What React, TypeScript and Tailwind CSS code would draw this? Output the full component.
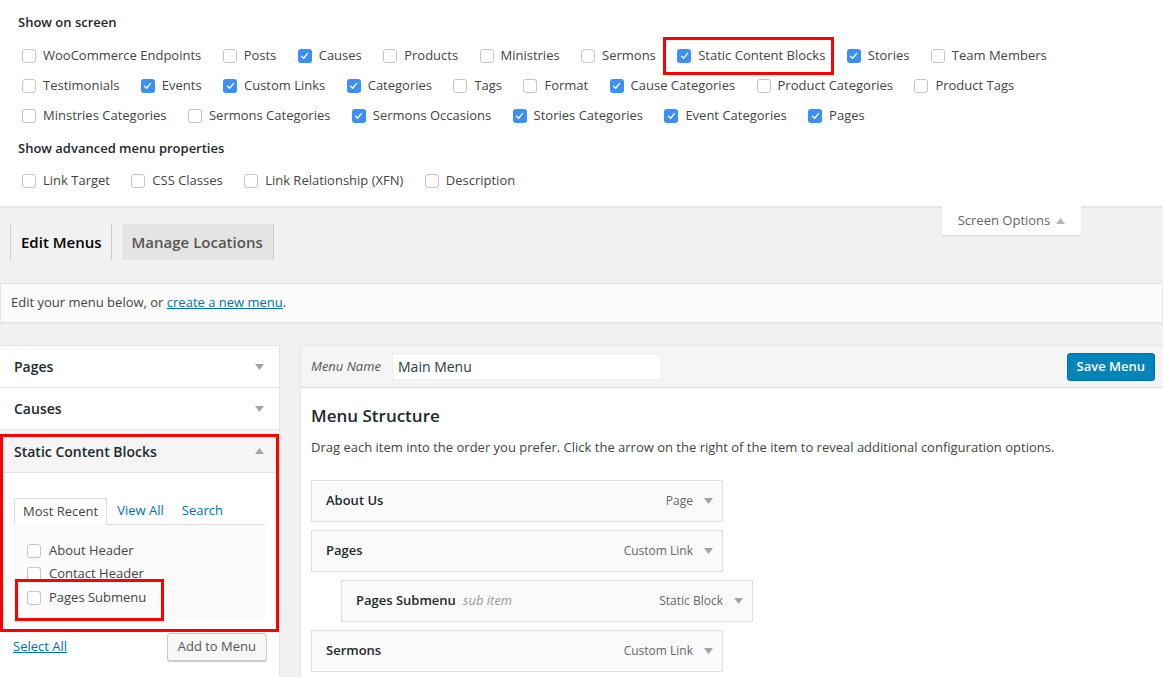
import React from 'react';

type Opt = { label: string; checked?: boolean; boxed?: boolean };

const rows: Opt[][] = [
    [
        { label: 'WooCommerce Endpoints' },
        { label: 'Posts' },
        { label: 'Causes', checked: true },
        { label: 'Products' },
        { label: 'Ministries' },
        { label: 'Sermons' },
        { label: 'Static Content Blocks', checked: true, boxed: true },
        { label: 'Stories', checked: true },
        { label: 'Team Members' },
    ],
    [
        { label: 'Testimonials' },
        { label: 'Events', checked: true },
        { label: 'Custom Links', checked: true },
        { label: 'Categories', checked: true },
        { label: 'Tags' },
        { label: 'Format' },
        { label: 'Cause Categories', checked: true },
        { label: 'Product Categories' },
        { label: 'Product Tags' },
    ],
    [
        { label: 'Minstries Categories' },
        { label: 'Sermons Categories' },
        { label: 'Sermons Occasions', checked: true },
        { label: 'Stories Categories', checked: true },
        { label: 'Event Categories', checked: true },
        { label: 'Pages', checked: true },
    ],
];

const advanced: Opt[] = [
    { label: 'Link Target' },
    { label: 'CSS Classes' },
    { label: 'Link Relationship (XFN)' },
    { label: 'Description' },
];

function Box({ checked }: { checked?: boolean }) {
    if (checked) {
        return (
            <span className="w-[14px] h-[14px] rounded-[3px] bg-[#3b8ff6] flex items-center justify-center shrink-0">
                <svg width="9" height="8" viewBox="0 0 9 8">
                    <path d="M1.5 4.2 L3.6 6.2 L7.6 1.4" fill="none" stroke="#fff" strokeWidth="1.4" strokeLinecap="round" strokeLinejoin="round" />
                </svg>
            </span>
        );
    }
    return <span className="w-[14px] h-[14px] rounded-[3px] bg-white border border-[#c4c4c4] shrink-0" />;
}

function Check({ opt }: { opt: Opt }) {
    return (
        <label className="relative flex items-center gap-[7px] text-[13px] text-[#444]">
            <Box checked={opt.checked} />
            <span>{opt.label}</span>
            {opt.boxed && (
                <span className="absolute -left-[14px] -right-[9px] -top-[9px] -bottom-[9px] border-[3px] border-[#f00]" />
            )}
        </label>
    );
}

function Arrow({ up, color = '#a0a5aa' }: { up?: boolean; color?: string }) {
    return (
        <svg width="9" height="6" viewBox="0 0 9 6" className="shrink-0">
            {up ? <path d="M0 6 L4.5 0 L9 6 Z" fill={color} /> : <path d="M0 0 L9 0 L4.5 6 Z" fill={color} />}
        </svg>
    );
}

function MenuItem({ title, type, sub, indent }: { title: string; type: string; sub?: string; indent?: boolean }) {
    return (
        <div className={`${indent ? 'ml-[30px]' : ''} w-[412px] h-[42px] bg-[#fafafa] border border-[#dfdfdf] flex items-center pl-[14px] pr-[9px]`}>
            <span className="font-semibold text-[13px] text-[#23282d]">{title}</span>
            {sub && <span className="ml-[7px] italic text-[13px] text-[#999]">{sub}</span>}
            <span className="ml-auto text-[12px] text-[#666]">{type}</span>
            <span className="ml-[11px]"><Arrow /></span>
        </div>
    );
}

export default function App() {
    return (
        <div className="w-[1163px] h-[677px] overflow-hidden bg-[#f1f1f1] text-[#444]" style={{ fontFamily: '"Open Sans", "Noto Sans", sans-serif' }}>
            {/* screen options panel */}
            <div className="bg-white border-b border-[#e5e5e5] shadow-[0_1px_1px_rgba(0,0,0,0.04)] pl-[18px] pt-[13px] pb-[10px]">
                <h5 className="font-semibold text-[13px] text-[#23282d] leading-[18px]">Show on screen</h5>
                <div className="mt-[10px] pl-[4px]">
                    {rows.map((row, i) => (
                        <div key={i} className="h-[30px] flex items-center gap-x-[21.4px]">
                            {row.map((o) => (
                                <Check key={o.label} opt={o} />
                            ))}
                        </div>
                    ))}
                </div>
                <h5 className="mt-[8px] font-semibold text-[13px] text-[#23282d] leading-[18px]">Show advanced menu properties</h5>
                <div className="mt-[9px] pl-[4px] h-[30px] flex items-center gap-x-[21.4px]">
                    {advanced.map((o) => (
                        <Check key={o.label} opt={o} />
                    ))}
                </div>
            </div>

            {/* tabs */}
            <div className="relative pt-[17px] px-[10px]">
                <div className="absolute right-[82px] -top-px w-[139px] h-[29px] bg-white shadow-[0_1px_1px_rgba(0,0,0,0.1)] flex items-center justify-center gap-[6px] text-[13px] text-[#666]">
                    Screen Options
                    <Arrow up color="#b4b9be" />
                </div>
                <div className="flex items-end gap-[10px]">
                    <div className="h-[36px] pl-[10px] pr-[9px] flex items-center border-x border-[#ccc] font-semibold text-[15px] text-black">Edit Menus</div>
                    <div className="h-[36px] px-[10px] flex items-center bg-[#e4e4e4] border-r border-[#ccc] font-semibold text-[15px] text-[#555]">Manage Locations</div>
                </div>
            </div>

            {/* notice */}
            <div className="mt-[23px] h-[40px] bg-[#fbfbfb] border border-[#e5e5e5] shadow-[0_1px_1px_rgba(0,0,0,0.04)] flex items-center px-[10px] text-[13px] text-[#444]">
                <span>
                    Edit your menu below, or <span className="text-[#0073aa] underline">create a new menu</span>.
                </span>
            </div>

            <div className="mt-[22px] flex gap-[20px] items-start">
                {/* left column */}
                <div className="w-[280px] shrink-0">
                    <div className="bg-white border border-l-0 border-[#e5e5e5]">
                        <div className="h-[42px] flex items-center justify-between px-[14px] pr-[15px] border-b border-[#e5e5e5]">
                            <span className="font-semibold text-[14px] text-[#23282d]">Pages</span>
                            <Arrow />
                        </div>
                        <div className="h-[42px] flex items-center justify-between px-[14px] pr-[15px] border-b border-[#e5e5e5]">
                            <span className="font-semibold text-[14px] text-[#23282d]">Causes</span>
                            <Arrow />
                        </div>
                        <div className="relative">
                            <div className="h-[43px] flex items-center justify-between px-[14px] pr-[15px] bg-[#f5f5f5] border-b border-[#e5e5e5]">
                                <span className="font-semibold text-[14px] text-[#23282d]">Static Content Blocks</span>
                                <Arrow up />
                            </div>
                            <div className="px-[14px] pt-[25px] pb-[5px]">
                                <div className="flex items-end border-b border-[#ddd] h-[27px] text-[13px]">
                                    <span className="h-[27px] px-[8px] flex items-center border border-b-0 border-[#ddd] bg-white text-[#444] -mb-px">Most Recent</span>
                                    <span className="h-[27px] pl-[10px] flex items-center text-[#0073aa]">View All</span>
                                    <span className="h-[27px] pl-[18px] flex items-center text-[#0073aa]">Search</span>
                                </div>
                                <div className="bg-[#fbfbfb] pl-[13px] pt-[14px] pb-[10px] text-[13px] text-[#444]">
                                    <div className="h-[23px] flex items-center gap-[8px]"><Box /> About Header</div>
                                    <div className="h-[23px] flex items-center gap-[8px]"><Box /> Contact Header</div>
                                    <div className="relative h-[25px] flex items-center gap-[8px]">
                                        <Box /> Pages Submenu
                                        <span className="absolute -left-[12px] top-[-6px] w-[149px] h-[42px] border-[3px] border-[#f00]" />
                                    </div>
                                </div>
                            </div>
                            <span className="absolute left-0 right-0 top-[4px] bottom-[-7px] border-[3px] border-[#f00] pointer-events-none" />
                        </div>
                        <div className="flex items-center justify-between pl-[13px] pr-[12px] pt-[8px] pb-[20px]">
                            <span className="text-[13px] text-[#0073aa] underline">Select All</span>
                            <span className="h-[28px] px-[10px] flex items-center bg-[#f7f7f7] border border-[#ccc] rounded-[3px] shadow-[0_1px_0_#ccc] text-[13px] text-[#555]">Add to Menu</span>
                        </div>
                    </div>
                </div>

                {/* right column */}
                <div className="flex-1 bg-white border border-r-0 border-[#e5e5e5] h-[340px]">
                    <div className="h-[42px] bg-[#f5f5f5] border-b border-[#dfdfdf] flex items-center pl-[10px] pr-[8px]">
                        <span className="italic text-[13px] text-[#555]">Menu Name</span>
                        <span className="ml-[11px] w-[270px] h-[27px] bg-white border border-[#eee] shadow-[inset_0_1px_2px_rgba(0,0,0,0.04)] flex items-center px-[5px] text-[14px] text-[#32373c]">Main Menu</span>
                        <span className="ml-auto h-[28px] px-[9px] flex items-center bg-[#0085ba] border border-[#0073aa] rounded-[3px] text-[13px] font-semibold text-white">Save Menu</span>
                    </div>
                    <div className="px-[10px]">
                        <h3 className="mt-[16px] text-[17px] font-semibold text-[#23282d] leading-[24px]">Menu Structure</h3>
                        <p className="mt-[10px] text-[13px] text-[#444] leading-[18px]">
                            Drag each item into the order you prefer. Click the arrow on the right of the item to reveal additional configuration options.
                        </p>
                        <div className="mt-[24px] flex flex-col gap-[8px]">
                            <MenuItem title="About Us" type="Page" />
                            <MenuItem title="Pages" type="Custom Link" />
                            <MenuItem title="Pages Submenu" sub="sub item" type="Static Block" indent />
                            <MenuItem title="Sermons" type="Custom Link" />
                        </div>
                    </div>
                </div>
            </div>
        </div>
    );
}
